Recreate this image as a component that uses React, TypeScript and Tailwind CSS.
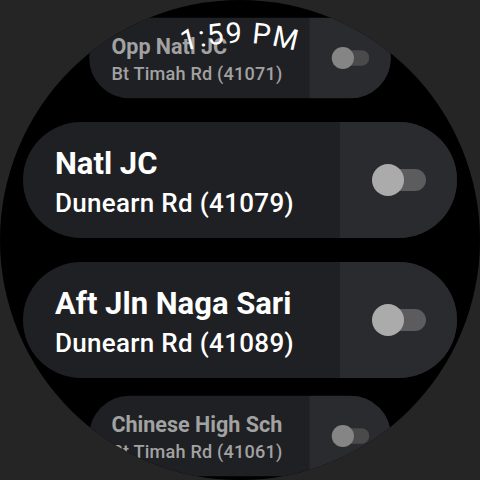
import React from "react"

type Stop = {
  name: string
  road: string
  code: string
}

const stops: Stop[] = [
  { name: "Opp Natl JC", road: "Bt Timah Rd", code: "41071" },
  { name: "Natl JC", road: "Dunearn Rd", code: "41079" },
  { name: "Aft Jln Naga Sari", road: "Dunearn Rd", code: "41089" },
  { name: "Chinese High Sch", road: "Bt Timah Rd", code: "41061" },
]

function Toggle({ dim }: { dim?: boolean }) {
  return (
    <div className="relative h-[32px] w-[54px]">
      <div
        className={
          "absolute right-0 top-[5px] h-[22px] w-[48px] rounded-full " +
          (dim ? "bg-[#4a4a4b]" : "bg-[#5c5c5e]")
        }
      />
      <div
        className={
          "absolute left-0 top-0 h-8 w-8 rounded-full " +
          (dim ? "bg-[#858585]" : "bg-[#ababab]")
        }
      />
    </div>
  )
}

function StopCard({
  stop,
  dim,
  className,
}: {
  stop: Stop
  dim?: boolean
  className?: string
}) {
  return (
    <div
      className={
        "flex h-[116px] w-[434px] shrink-0 overflow-hidden rounded-full bg-[#1f2023] " +
        (className ?? "")
      }
    >
      <div className="flex min-w-0 flex-1 flex-col pl-[32px] pt-[24px]">
        <div
          className={
            "whitespace-nowrap text-[31px] font-bold leading-[36px] " +
            (dim ? "text-[#a2a2a2]" : "text-white")
          }
        >
          {stop.name}
        </div>
        <div
          className={
            "mt-[3px] whitespace-nowrap text-[26px] font-medium leading-[36px] tracking-[0.3px] " +
            (dim ? "text-[#a2a2a2]" : "text-white")
          }
        >
          {stop.road} ({stop.code})
        </div>
      </div>
      <div className="flex w-[117px] items-center justify-center bg-[#2a2b2e]">
        <Toggle dim={dim} />
      </div>
    </div>
  )
}

function CurvedTime() {
  return (
    <svg
      className="pointer-events-none absolute inset-0"
      width={480}
      height={480}
      viewBox="0 0 480 480"
    >
      <defs>
        <path id="timeArc" d="M 43 240 A 197 197 0 0 1 437 240" fill="none" />
      </defs>
      <text
        fill="#ffffff"
        fontSize={29}
        letterSpacing={1.2}
        style={{ fontFamily: "Roboto, 'Noto Sans', sans-serif", fontWeight: 400 }}
      >
        <textPath href="#timeArc" startOffset="50%" textAnchor="middle">
          1:59 PM
        </textPath>
      </text>
    </svg>
  )
}

export default function App() {
  return (
    <div className="relative h-[480px] w-[480px] overflow-hidden bg-[#252525] font-['Roboto','Noto_Sans',sans-serif]">
      <div className="flex h-[480px] w-[480px] flex-col items-center overflow-hidden rounded-full bg-black">
        <StopCard stop={stops[0]} dim className="scale-[0.695]" />
        <StopCard stop={stops[1]} className="mt-[6px]" />
        <StopCard stop={stops[2]} className="mt-[24px]" />
        <StopCard stop={stops[3]} dim className="scale-[0.695]" />
      </div>
      <CurvedTime />
    </div>
  )
}
